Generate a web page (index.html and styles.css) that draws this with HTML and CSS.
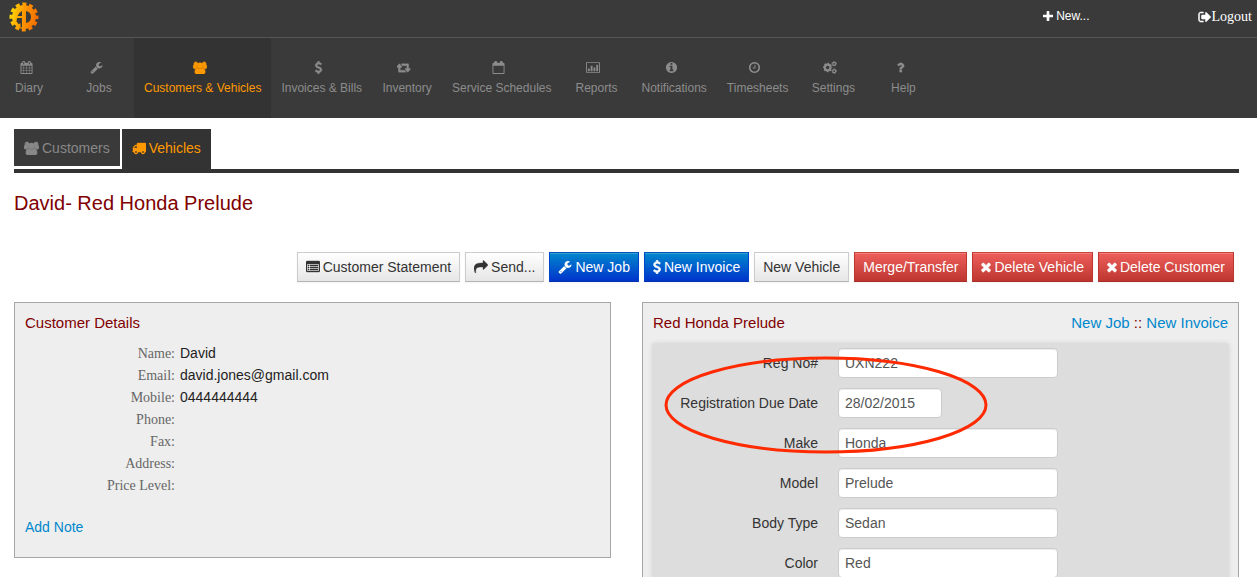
FILE: index.html
```html
<!DOCTYPE html>
<html lang="en">
<head>
<meta charset="utf-8">
<title>David- Red Honda Prelude</title>
<link rel="stylesheet" href="styles.css">
</head>
<body>
<svg class="sprite" aria-hidden="true">
  <symbol id="wrench" viewBox="0 0 1792 1792"><path d="M448 1472q0-26-19-45t-45-19-45 19-19 45 19 45 45 19 45-19 19-45zm644-420l-682 682q-37 37-90 37-52 0-91-37l-106-108q-38-36-38-90 0-53 38-91l681-681q39 98 114.500 173.500t173.500 114.500zm634-435q0 39-23 106-47 134-164.500 217.500t-258.500 83.500q-185 0-316.500-131.500t-131.500-316.500 131.500-316.500 316.500-131.500q58 0 121.500 16.500t107.500 46.500q16 11 16 28t-16 28l-293 169v224l193 107q5-3 79-48.500t135.500-81 70.500-35.500q15 0 23.500 10t8.500 25z"/></symbol>
  <symbol id="calendar" viewBox="0 0 1792 1792"><path d="M192 1664h288v-288h-288v288zm352 0h320v-288h-320v288zm-352-352h288v-320h-288v320zm352 0h320v-320h-320v320zm-352-384h288v-288h-288v288zm736 736h320v-288h-320v288zm-384-736h320v-288h-320v288zm768 736h288v-288h-288v288zm-384-352h320v-320h-320v320zm-352-864v-288q0-13-9.500-22.500t-22.500-9.500h-64q-13 0-22.500 9.500t-9.500 22.500v288q0 13 9.500 22.500t22.500 9.500h64q13 0 22.500-9.500t9.500-22.500zm736 864h288v-320h-288v320zm-384-384h320v-288h-320v288zm384 0h288v-288h-288v288zm32-480v-288q0-13-9.500-22.500t-22.500-9.500h-64q-13 0-22.500 9.500t-9.500 22.500v288q0 13 9.500 22.500t22.500 9.500h64q13 0 22.500-9.500t9.500-22.500zm384-64v1280q0 52-38 90t-90 38h-1408q-52 0-90-38t-38-90v-1280q0-52 38-90t90-38h128v-96q0-66 47-113t113-47h64q66 0 113 47t47 113v96h384v-96q0-66 47-113t113-47h64q66 0 113 47t47 113v96h128q52 0 90 38t38 90z"/></symbol>
  <symbol id="calendar-empty" viewBox="0 0 1792 1792"><path d="M192 1664h1408v-1024h-1408v1024zM1728 384v1280q0 52-38 90t-90 38h-1408q-52 0-90-38t-38-90v-1280q0-52 38-90t90-38h128v-96q0-66 47-113t113-47h64q66 0 113 47t47 113v96h384v-96q0-66 47-113t113-47h64q66 0 113 47t47 113v96h128q52 0 90 38t38 90z"/></symbol>
  <symbol id="group" viewBox="0 0 1920 1792"><g stroke="currentColor" stroke-width="90"><circle cx="384" cy="384" r="256"/><circle cx="1536" cy="384" r="256"/><circle cx="960" cy="640" r="384"/><path d="M593 896q-162 5-265 128H194q-82 0-138-40.500T0 865q0-353 124-353 6 0 43.500 21t97.500 42.500T384 597q67 0 133-23-5 37-5 66 0 139 81 256zM1664 1533q0 120-73 189.500t-194 69.500H523q-121 0-194-69.500T256 1533q0-53 3.500-103.500t14-109T300 1212t43-97.500 62-81 85.500-53.500T602 960q10 0 43 21.500t73 48 107 48T960 1099t135-21.500 107-48 73-48 43-21.500q61 0 111.500 20t85.500 53.500 62 81 43 97.500 26.500 108.500 14 109 3.500 103zM1920 865q0 78-56 118.500T1726 1024h-134q-103-123-265-128 81-117 81-256 0-29-5-66 66 23 133 23 59 0 119-21.500t97.500-42.500 43.500-21q124 0 124 353z"/></g></symbol>
  <symbol id="dollar" viewBox="384 0 1024 1792"><path stroke="currentColor" stroke-width="70" d="M1362 1185q0 153-99.500 263.500t-258.500 136.500v175q0 14-9 23t-23 9h-135q-13 0-22.500-9.500t-9.500-22.500v-175q-66-9-127.500-31t-101.500-44.500-74-48-46.500-37.500-17.500-18q-17-21-2-41l103-135q7-10 23-12 15-2 24 9l2 2q113 99 243 125 37 8 74 8 81 0 142.500-43t61.500-122q0-28-15-53t-33.500-42-58.500-37.500-66-32-80-32.500q-39-16-61.500-25t-61.500-26.500-62.500-31-56.500-35.500-53.500-42.500-43.500-49-35.500-58-21-66.500-8.500-78q0-138 98-242t255-134v-180q0-13 9.500-22.500t22.500-9.500h135q14 0 23 9t9 23v176q57 6 110.500 23t87 33.500 63.500 37.500 39 29 15 14q17 18 5 38l-81 146q-8 15-23 16-14 3-27-7-3-3-14.500-12t-39-26.500-58.500-32-74.500-26-85.500-11.500q-95 0-155 43t-60 111q0 26 8.500 48t29.500 41.500 39.500 33 56 31 60.500 27 70 27.500q53 20 81 31.500t76 35 75.500 42.500 62 50 53 63.500 31.500 76.500 13 94z"/></symbol>
  <symbol id="retweet" viewBox="0 0 1920 1792"><path stroke="currentColor" stroke-width="50" d="M1216 1504q0 13-9.500 22.500t-22.500 9.500h-960q-8 0-13.500-2t-9-7-5.500-8-3-11.500-1-11.500v-600h-192q-26 0-45-19t-19-45q0-24 15-41l320-384q19-22 49-22t49 22l320 384q15 17 15 41 0 26-19 45t-45 19h-192v384h576q16 0 25 11l160 192q7 10 7 21zm640-416q0 24-15 41l-320 384q-20 23-49 23t-49-23l-320-384q-15-17-15-41 0-26 19-45t45-19h192v-384h-576q-16 0-25-12l-160-192q-7-9-7-20 0-13 9.500-22.500t22.500-9.500h960q8 0 13.500 2t9 7 5.500 8 3 11.500 1 11.500v600h192q26 0 45 19t19 45z"/></symbol>
  <symbol id="chart" viewBox="0 0 1920 1792"><path fill-rule="evenodd" d="M160 128H1760Q1920 128 1920 288V1504Q1920 1664 1760 1664H160Q0 1664 0 1504V288Q0 128 160 128zM160 256Q128 256 128 288V1504Q128 1536 160 1536H1760Q1792 1536 1792 1504V288Q1792 256 1760 256zM256 1024H512V1408H256zM640 640H896V1408H640zM1024 896H1280V1408H1024zM1408 512H1664V1408H1408z"/></symbol>
  <symbol id="info" viewBox="0 0 1792 1792"><path d="M1152 1376v-160q0-14-9-23t-23-9h-96v-512q0-14-9-23t-23-9h-320q-14 0-23 9t-9 23v160q0 14 9 23t23 9h96v320h-96q-14 0-23 9t-9 23v160q0 14 9 23t23 9h448q14 0 23-9t9-23zm-128-896v-160q0-14-9-23t-23-9h-192q-14 0-23 9t-9 23v160q0 14 9 23t23 9h192q14 0 23-9t9-23zm640 416q0 209-103 385.500t-279.500 279.500-385.500 103-385.500-103-279.500-279.500-103-385.500 103-385.500 279.500-279.500 385.500-103 385.500 103 279.500 279.500 103 385.500z"/></symbol>
  <symbol id="clock" viewBox="0 0 1792 1792"><path d="M1024 544v448q0 14-9 23t-23 9h-320q-14 0-23-9t-9-23v-64q0-14 9-23t23-9h224v-352q0-14 9-23t23-9h64q14 0 23 9t9 23zm416 352q0-148-73-273t-198-198-273-73-273 73-198 198-73 273 73 273 198 198 273 73 273-73 198-198 73-273zm224 0q0 209-103 385.500t-279.500 279.500-385.500 103-385.500-103-279.500-279.500-103-385.500 103-385.500 279.500-279.500 385.500-103 385.500 103 279.500 279.500 103 385.500z"/></symbol>
  <symbol id="cogs" viewBox="0 0 1920 1792"><g fill="none" stroke="currentColor"><circle cx="640" cy="896" r="390" stroke-width="290"/><circle cx="640" cy="896" r="570" stroke-width="150" stroke-dasharray="224 224" stroke-dashoffset="112"/><circle cx="1536" cy="384" r="205" stroke-width="170"/><circle cx="1536" cy="384" r="320" stroke-width="120" stroke-dasharray="168 167" stroke-dashoffset="84"/><circle cx="1536" cy="1408" r="205" stroke-width="170"/><circle cx="1536" cy="1408" r="320" stroke-width="120" stroke-dasharray="168 167" stroke-dashoffset="84"/></g></symbol>
  <symbol id="question" viewBox="0 0 1792 1792"><path stroke="currentColor" stroke-width="50" d="M1088 1256v240q0 16-12 28t-28 12h-240q-16 0-28-12t-12-28v-240q0-16 12-28t28-12h240q16 0 28 12t12 28zm316-600q0 54-15.500 101t-35 76.500-55 59.500-57.500 43.500-61 35.500q-41 23-68.500 65t-27.500 67q0 17-12 32.500t-28 15.500h-240q-15 0-25.500-18.500t-10.500-37.500v-45q0-83 65-156.500t143-108.500q59-27 84-56t25-76q0-42-46.500-74t-107.500-32q-65 0-108 29-35 25-107 115-13 16-31 16-12 0-25-8l-164-125q-13-10-15.500-25t5.500-28q160-266 464-266 80 0 161 31t146 83 106 127.500 41 158.500z"/></symbol>
  <symbol id="plus" viewBox="192 128 1408 1408"><path d="M1600 736v192q0 40-28 68t-68 28h-416v416q0 40-28 68t-68 28h-192q-40 0-68-28t-28-68v-416h-416q-40 0-68-28t-28-68v-192q0-40 28-68t68-28h416v-416q0-40 28-68t68-28h192q40 0 68 28t28 68v416h416q40 0 68 28t28 68z"/></symbol>
  <symbol id="sign-out" viewBox="0 0 1792 1792"><path stroke="currentColor" stroke-width="70" d="M704 1440q0 4 1 20t.5 26.500-3 23.500-10 19.500-20.500 6.500h-320q-119 0-203.500-84.500t-84.500-203.500v-704q0-119 84.500-203.500t203.500-84.500h320q13 0 22.500 9.500t9.500 22.500q0 4 1 20t.5 26.500-3 23.500-10 19.500-20.500 6.500h-320q-66 0-113 47t-47 113v704q0 66 47 113t113 47h312l11.500 1 11.500 3 8 5.500 7 9 2 13.500zm928-544q0 26-19 45l-544 544q-19 19-45 19t-45-19-19-45v-288h-448q-26 0-45-19t-19-45v-384q0-26 19-45t45-19h448v-288q0-26 19-45t45-19 45 19l544 544q19 19 19 45z"/></symbol>
  <symbol id="truck" viewBox="0 0 1792 1792"><path stroke="currentColor" stroke-width="50" d="M640 1408q0-52-38-90t-90-38-90 38-38 90 38 90 90 38 90-38 38-90zm-384-512h384v-256h-158q-13 0-22 9l-195 195q-9 9-9 22v30zm1280 512q0-52-38-90t-90-38-90 38-38 90 38 90 90 38 90-38 38-90zm256-1088v1024q0 15-4 26.500t-13.500 18.500-16.500 11.500-23.500 6-22.500 2-25.500 0-22.500-.5q0 106-75 181t-181 75-181-75-75-181h-384q0 106-75 181t-181 75-181-75-75-181h-64q-3 0-22.500.5t-25.500 0-22.500-2-23.500-6-16.500-11.500-13.500-18.500-4-26.500q0-26 19-45t45-19v-320q0-8-.5-35t0-38 2.500-34.500 6.500-37 14-30.500 22.500-30l198-198q19-19 50.500-32t58.500-13h160v-192q0-26 19-45t45-19h1024q26 0 45 19t19 45z"/></symbol>
  <symbol id="list" viewBox="0 0 1792 1792"><path fill-rule="evenodd" stroke="currentColor" stroke-width="50" d="M160 128H1632Q1792 128 1792 288V1376Q1792 1536 1632 1536H160Q0 1536 0 1376V288Q0 128 160 128zM128 512V1376Q128 1408 160 1408H1632Q1664 1408 1664 1376V512zM256 640H384V768H256zM512 640H1536V768H512zM256 896H384V1024H256zM512 896H1536V1024H512zM256 1152H384V1280H256zM512 1152H1536V1280H512z"/></symbol>
  <symbol id="share" viewBox="0 0 1792 1792"><path stroke="currentColor" stroke-width="50" d="M1792 640q0 26-19 45l-512 512q-19 19-45 19t-45-19-19-45v-256h-224q-98 0-175.500 6t-154 21.500-133 42.500-105.500 69.500-80 101-48.500 138.500-17.500 181q0 55 5 123 0 6 2.500 23.500t2.500 26.500q0 15-8.500 25t-23.500 10q-16 0-28-17-7-9-13-22t-13.500-30-10.500-24q-127-285-127-451 0-199 53-333 162-403 875-403h224v-256q0-26 19-45t45-19 45 19l512 512q19 19 19 45z"/></symbol>
  <symbol id="times" viewBox="270 0 1250 1792"><path stroke="currentColor" stroke-width="60" d="M1490 1322q0 40-28 68l-136 136q-28 28-68 28t-68-28l-294-294-294 294q-28 28-68 28t-68-28l-136-136q-28-28-28-68t28-68l294-294-294-294q-28-28-28-68t28-68l136-136q28-28 68-28t68 28l294 294 294-294q28-28 68-28t68 28l136 136q28 28 28 68t-28 68l-294 294 294 294q28 28 28 68z"/></symbol>
</svg>

<header class="header">
  <div class="topbar">
    <a class="logo" href="#" aria-label="Home">
      <svg viewBox="0 0 30 30">
        <defs><linearGradient id="flame" gradientUnits="userSpaceOnUse" x1="1" y1="12" x2="29" y2="18"><stop offset="0" stop-color="#ffd800"/><stop offset=".45" stop-color="#ff9a00"/><stop offset="1" stop-color="#f26a00"/></linearGradient></defs>
        <circle cx="15" cy="15" r="12" fill="url(#flame)"/>
        <circle cx="15" cy="15" r="12.500" fill="none" stroke="url(#flame)" stroke-width="4" stroke-dasharray="3.900 2.640" stroke-dashoffset="1.900"/>
        <g fill="#3a3a3a"><path d="M17 9Q22 10 22 15T17 21z"/><path d="M13 9V14H8.500Q10 10.500 13 9zM8 16H13V25L11.500 26V21.500L9.500 22 7.500 19.500z"/></g>
      </svg>
    </a>
    <div class="top-links">
      <button class="new-button" type="button"><svg class="icon"><use href="#plus"/></svg>New...</button>
      <a class="logout" href="#"><svg class="icon"><use href="#sign-out"/></svg>Logout</a>
    </div>
  </div>
  <nav class="nav">
    <a href="#"><svg class="icon"><use href="#calendar"/></svg>Diary</a>
    <a href="#"><svg class="icon"><use href="#wrench"/></svg>Jobs</a>
    <a class="active" href="#"><svg class="icon wide"><use href="#group"/></svg>Customers &amp; Vehicles</a>
    <a href="#"><svg class="icon"><use href="#dollar"/></svg>Invoices &amp; Bills</a>
    <a href="#"><svg class="icon wide"><use href="#retweet"/></svg>Inventory</a>
    <a href="#"><svg class="icon"><use href="#calendar-empty"/></svg>Service Schedules</a>
    <a href="#"><svg class="icon wide"><use href="#chart"/></svg>Reports</a>
    <a href="#"><svg class="icon"><use href="#info"/></svg>Notifications</a>
    <a href="#"><svg class="icon"><use href="#clock"/></svg>Timesheets</a>
    <a href="#"><svg class="icon wide"><use href="#cogs"/></svg>Settings</a>
    <a href="#"><svg class="icon"><use href="#question"/></svg>Help</a>
  </nav>
</header>

<main class="page">
  <nav class="tabs">
    <a class="tab" href="#"><svg class="icon wide"><use href="#group"/></svg>Customers</a>
    <a class="tab active" href="#"><svg class="icon"><use href="#truck"/></svg>Vehicles</a>
  </nav>
  <h1>David- Red Honda Prelude</h1>
  <div class="actions">
    <button class="btn" type="button"><svg class="icon"><use href="#list"/></svg>Customer Statement</button>
    <button class="btn" type="button"><svg class="icon"><use href="#share"/></svg>Send...</button>
    <button class="btn primary" type="button"><svg class="icon"><use href="#wrench"/></svg>New Job</button>
    <button class="btn primary" type="button"><svg class="icon slim"><use href="#dollar"/></svg>New Invoice</button>
    <button class="btn" type="button">New Vehicle</button>
    <button class="btn danger" type="button">Merge/Transfer</button>
    <button class="btn danger" type="button"><svg class="icon cross"><use href="#times"/></svg>Delete Vehicle</button>
    <button class="btn danger" type="button"><svg class="icon cross"><use href="#times"/></svg>Delete Customer</button>
  </div>
  <div class="panels">
    <section class="panel">
      <h2>Customer Details</h2>
      <dl class="details">
        <dt>Name:</dt><dd>David</dd>
        <dt>Email:</dt><dd>david.jones@gmail.com</dd>
        <dt>Mobile:</dt><dd>0444444444</dd>
        <dt>Phone:</dt><dd></dd>
        <dt>Fax:</dt><dd></dd>
        <dt>Address:</dt><dd></dd>
        <dt>Price Level:</dt><dd></dd>
      </dl>
      <a class="note" href="#">Add Note</a>
    </section>
    <section class="panel">
      <div class="panel-head">
        <h2>Red Honda Prelude</h2>
        <div class="panel-links"><a href="#">New Job</a> :: <a href="#">New Invoice</a></div>
      </div>
      <form class="form">
        <label for="reg">Reg No#</label><input id="reg" type="text" value="UXN222">
        <label for="due">Registration Due Date</label><input id="due" class="short" type="text" value="28/02/2015">
        <label for="make">Make</label><input id="make" type="text" value="Honda">
        <label for="model">Model</label><input id="model" type="text" value="Prelude">
        <label for="body">Body Type</label><input id="body" type="text" value="Sedan">
        <label for="color">Color</label><input id="color" type="text" value="Red">
        <svg class="marker" viewBox="0 0 324 98" aria-hidden="true"><ellipse cx="162" cy="49" rx="160" ry="47"/></svg>
      </form>
    </section>
  </div>
</main>
</body>
</html>
```
FILE: styles.css
```css
* { box-sizing: border-box; }
html { scrollbar-width: none; }
body {
  margin: 0;
  background: #fff;
  color: #333;
  font: 14px/20px "Liberation Sans", Arial, sans-serif;
}
a { color: #0088cc; text-decoration: none; }
button { font: inherit; }
h1, h2 { margin: 0; color: #800000; font-weight: normal; }
.sprite { position: absolute; width: 0; height: 0; }
.icon { width: 14px; height: 14px; flex: none; fill: currentColor; }
.icon.wide { width: 15px; }
.icon.slim { width: 8px; }
.icon.cross { width: 10px; }

.header { background: #3a3a3a; }
.topbar {
  display: flex;
  justify-content: space-between;
  height: 38px;
  padding: 2px 5px 0 9px;
  border-bottom: 1px solid #555;
}
.logo svg { display: block; width: 30px; height: 30px; }
.top-links { display: flex; align-items: flex-start; gap: 108px; padding-top: 4px; }
.new-button {
  display: flex;
  align-items: center;
  gap: 3px;
  padding: 0;
  border: 0;
  background: none;
  color: #fff;
  font-size: 12px;
  line-height: 20px;
}
.new-button .icon { width: 10px; height: 10px; }
.logout {
  display: flex;
  align-items: center;
  padding-top: 1px;
  color: #fff;
  font: 14px/20px "Liberation Serif", "Times New Roman", serif;
}

.nav { display: flex; height: 80px; margin-left: -6px; }
.nav a {
  display: flex;
  flex-direction: column;
  align-items: center;
  gap: 4px;
  min-width: 70px;
  padding: 23px 10px 0;
  color: #8c8c8c;
  font-size: 12px;
  white-space: nowrap;
}
.nav .icon { width: 13px; height: 13px; margin-right: 6px; }
.nav .icon.wide { width: 14px; }
.nav .active { background: #333; color: #ff9900; }

.page { padding: 11px 18px 20px 14px; }
.tabs {
  display: flex;
  align-items: flex-start;
  gap: 2px;
  border-bottom: 4px solid #333;
}
.tab {
  display: flex;
  align-items: center;
  gap: 3px;
  height: 37px;
  padding: 0 10px;
  background: #3a3a3a;
  color: #888;
}
.tab.active { height: 40px; padding-bottom: 2px; background: #333; color: #ff9900; }

h1 { margin-top: 15px; font-size: 20px; line-height: 30px; }
.actions { display: flex; flex-wrap: wrap; justify-content: flex-end; gap: 5px; margin: 34px 5px 0 0; }
.btn {
  display: flex;
  align-items: center;
  gap: 3px;
  height: 30px;
  padding: 0 8px;
  border: 1px solid #ccc;
  border-bottom-color: #b3b3b3;
  background: linear-gradient(#fff, #e6e6e6);
  box-shadow: inset 0 1px 0 rgba(255, 255, 255, .2), 0 1px 2px rgba(0, 0, 0, .05);
  color: #333;
  white-space: nowrap;
}
.btn.primary { border-color: #0055bb #0044cc #0033aa; background: linear-gradient(#0088cc, #0033cc); color: #fff; }
.btn.danger { border-color: #c8443d #bd362f #a82f28; background: linear-gradient(#ee5f5b, #bd362f); color: #fff; }

.panels { display: grid; grid-template-columns: 1fr 1fr; align-items: start; gap: 31px; margin-top: 20px; }
.panel { padding: 10px; border: 1px solid #a6a6a6; background: #eee; }
h2 { font-size: 15px; line-height: 20px; }
.details {
  display: grid;
  grid-template-columns: 150px 1fr;
  column-gap: 5px;
  grid-auto-rows: 22px;
  margin: 9px 0 21px;
  line-height: 22px;
}
.details dt { padding-top: 1px; color: #666; font-family: "Liberation Serif", "Times New Roman", serif; text-align: right; }
.details dd { margin: 0; color: #222; }
.note { display: block; padding-bottom: 10px; }
.panel-head { display: flex; justify-content: space-between; }
.panel-links { color: #800000; font-size: 15px; }
.form {
  position: relative;
  display: grid;
  grid-template-columns: 166px 1fr;
  align-items: center;
  gap: 10px 20px;
  margin: 10px -1px 0;
  padding: 5px 0 20px;
  border-radius: 3px;
  background: #ddd;
  box-shadow: 0 0 5px rgba(0, 0, 0, .1);
}
.form label { text-align: right; }
.form input {
  width: 220px;
  height: 30px;
  padding: 4px 6px;
  border: 1px solid #ccc;
  border-radius: 4px;
  background: #fff;
  box-shadow: inset 0 1px 1px rgba(0, 0, 0, .075);
  color: #555;
  font: inherit;
}
.form input.short { width: 104px; }
.marker { position: absolute; top: 13px; left: 12px; width: 324px; height: 98px; pointer-events: none; }
.marker ellipse { fill: none; stroke: #ff2a00; stroke-width: 3; }
```
